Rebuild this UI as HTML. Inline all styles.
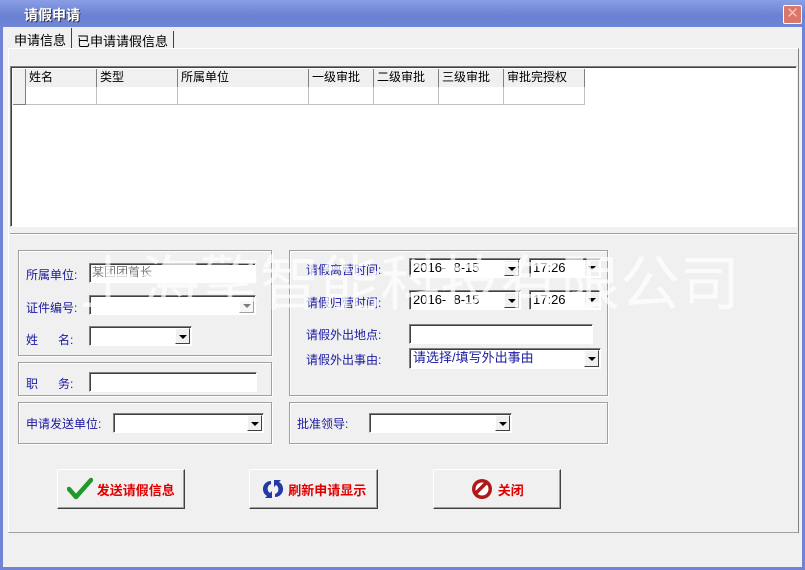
<!DOCTYPE html>
<html><head><meta charset="utf-8"><style>
*{box-sizing:border-box;margin:0;padding:0}
body{width:805px;height:570px;overflow:hidden;background:#6f84d4;font-family:"Liberation Sans","Noto Sans CJK SC","WenQuanYi Zen Hei",sans-serif;font-size:12px;position:relative}
.a{position:absolute}
.win{left:3px;top:27px;width:799px;height:540px;background:#f0f0f0}
.title{left:0;top:0;width:805px;height:27px;background:linear-gradient(#8a9ee6,#6a80d2 60%,#6f86d6)}
.gb{border:1px solid #a0a0a0;box-shadow:inset 1px 1px 0 #fff,1px 1px 0 #fff}
.in{background:#fff;border-top:1px solid #808080;border-left:1px solid #808080;border-bottom:1px solid #fff;border-right:1px solid #fff;box-shadow:inset 1px 1px 0 #404040}
.dd{position:absolute;right:1px;top:1px;width:15px;bottom:1px;background:#f0f0f0;border:1px solid;border-color:#fff #404040 #404040 #fff}
.dd:after{content:"";position:absolute;left:3px;top:6px;border:4px solid transparent;border-top:4px solid #000;border-bottom:0}
.lb{color:#1a1aa0;font-size:12px}
.btn{background:#f0f0f0;border:1px solid;border-color:#fff #404040 #404040 #fff;box-shadow:inset -1px -1px 0 #a0a0a0;color:#e00000;font-weight:bold;font-size:13px;display:flex;align-items:center;justify-content:center}
.th{position:absolute;top:0;height:18px;border-right:1px solid #808080;background:#f0f0f0;padding-left:3px;line-height:17px;font-size:12px}
.td{position:absolute;top:18px;height:18px;border-right:1px solid #c0c0c0;border-bottom:1px solid #c0c0c0}
.dv{font-size:13px}
</style></head><body>
<div class="a title"></div>
<div class="a" style="left:24px;top:5px;color:#fff;font-weight:bold;font-size:14px;text-shadow:1px 1px 0 #334">请假申请</div>
<div class="a" style="left:783px;top:5px;width:19px;height:19px;background:#d9776b;border:1px solid #fff;border-radius:2px;color:#f4c0b8;text-align:center;line-height:16px;font-size:15px">✕</div>
<div class="a win"></div>
<div class="a" style="left:8px;top:28px;width:64px;height:21px;background:#f0f0f0;border-right:1px solid #404040;font-size:13px;padding:2px 0 0 6px">申请信息</div>
<div class="a" style="left:74px;top:31px;width:100px;height:17px;border-right:1px solid #404040;font-size:13px;padding-left:3px">已申请请假信息</div>
<div class="a" style="left:8px;top:48px;width:791px;height:485px;border:1px solid;border-color:#fff #808080 #808080 #fff"></div>
<div class="a" style="left:10px;top:66px;width:787px;height:161px;background:#fff;border:1px solid;border-color:#808080 #fff #fff #808080;box-shadow:inset 1px 1px 0 #404040">
 <div class="a" style="left:2px;top:2px;width:572px;height:37px">
  <div class="th" style="left:0;width:13px;padding:0"></div>
  <div class="th" style="left:13px;width:71px">姓名</div>
  <div class="th" style="left:84px;width:81px">类型</div>
  <div class="th" style="left:165px;width:131px">所属单位</div>
  <div class="th" style="left:296px;width:65px">一级审批</div>
  <div class="th" style="left:361px;width:65px">二级审批</div>
  <div class="th" style="left:426px;width:65px">三级审批</div>
  <div class="th" style="left:491px;width:81px">审批完授权</div>
  <div class="td" style="left:0;width:13px;background:#f0f0f0;border-color:#808080"></div>
  <div class="td" style="left:13px;width:71px"></div><div class="td" style="left:84px;width:81px"></div><div class="td" style="left:165px;width:131px"></div><div class="td" style="left:296px;width:65px"></div><div class="td" style="left:361px;width:65px"></div><div class="td" style="left:426px;width:65px"></div><div class="td" style="left:491px;width:81px"></div>
 </div>
</div>
<div class="a" style="left:10px;top:233px;width:787px;height:1px;background:#a0a0a0;box-shadow:0 1px 0 #fff"></div>
<div class="a gb" style="left:18px;top:250px;width:254px;height:106px"></div>
<div class="a gb" style="left:18px;top:362px;width:254px;height:34px"></div>
<div class="a gb" style="left:18px;top:402px;width:254px;height:42px"></div>
<div class="a gb" style="left:289px;top:250px;width:319px;height:146px"></div>
<div class="a gb" style="left:289px;top:402px;width:319px;height:42px"></div>
<div class="a" style="left:9px;top:532px;width:789px;height:1px;background:#a0a0a0"></div>
<div class="a lb" style="left:26px;top:266px">所属单位:</div>
<div class="a in" style="left:89px;top:263px;width:167px;height:20px;padding-left:2px;color:#777;line-height:16px">某团团首长</div>
<div class="a lb" style="left:26px;top:299px">证件编号:</div>
<div class="a in" style="left:89px;top:295px;width:167px;height:20px"><div class="dd" style="opacity:.5"></div></div>
<div class="a lb" style="left:26px;top:331px">姓&nbsp;&nbsp;&nbsp;&nbsp;&nbsp;&nbsp;名:</div>
<div class="a in" style="left:89px;top:326px;width:103px;height:20px"><div class="dd"></div></div>
<div class="a lb" style="left:26px;top:375px">职&nbsp;&nbsp;&nbsp;&nbsp;&nbsp;&nbsp;务:</div>
<div class="a in" style="left:89px;top:372px;width:168px;height:20px"></div>
<div class="a lb" style="left:26px;top:415px">申请发送单位:</div>
<div class="a in" style="left:113px;top:413px;width:151px;height:20px"><div class="dd"></div></div>
<div class="a lb" style="left:306px;top:261px">请假离营时间:</div>
<div class="a in dv" style="left:409px;top:258px;width:112px;height:20px;padding-left:3px;line-height:17px">2016-&nbsp; 8-15<div class="dd"></div></div>
<div class="a in dv" style="left:529px;top:258px;width:72px;height:20px;padding-left:3px;line-height:17px">17:26<div class="dd" style="border:0;width:14px"></div></div>
<div class="a lb" style="left:306px;top:294px">请假归营时间:</div>
<div class="a in dv" style="left:409px;top:290px;width:112px;height:20px;padding-left:3px;line-height:17px">2016-&nbsp; 8-15<div class="dd"></div></div>
<div class="a in dv" style="left:529px;top:290px;width:72px;height:20px;padding-left:3px;line-height:17px">17:26<div class="dd" style="border:0;width:14px"></div></div>
<div class="a lb" style="left:306px;top:326px">请假外出地点:</div>
<div class="a in" style="left:409px;top:324px;width:184px;height:20px"></div>
<div class="a lb" style="left:306px;top:351px">请假外出事由:</div>
<div class="a in" style="left:409px;top:348px;width:192px;height:21px;padding-left:3px;line-height:17px;color:#1a1aa0;font-size:13px">请选择/填写外出事由<div class="dd"></div></div>
<div class="a lb" style="left:297px;top:415px">批准领导:</div>
<div class="a in" style="left:369px;top:413px;width:143px;height:20px"><div class="dd"></div></div>
<div class="a" style="left:80px;top:236px;font-size:60px;color:rgba(255,255,255,.7);white-space:nowrap">上海擎智能科技有限公司</div>
<div class="a btn" style="left:57px;top:469px;width:128px;height:40px"><svg width="26" height="24" viewBox="0 0 26 24"><path d="M2 12 L9 20 L24 3" stroke="#1f9a2a" stroke-width="4.5" fill="none" stroke-linecap="round" stroke-linejoin="round"/></svg>&nbsp;发送请假信息</div>
<div class="a btn" style="left:249px;top:469px;width:129px;height:40px"><svg width="24" height="24" viewBox="0 0 24 24"><path d="M10 4 A8 8 0 0 0 6 19 L4 21 L11 21 L11 14 L9 16 A5 5 0 0 1 10 7 Z M14 20 A8 8 0 0 0 18 5 L20 3 L13 3 L13 10 L15 8 A5 5 0 0 1 14 17 Z" fill="#2438a8"/></svg>&nbsp;刷新申请显示</div>
<div class="a btn" style="left:433px;top:469px;width:128px;height:40px"><svg width="24" height="24" viewBox="0 0 24 24"><circle cx="12" cy="12" r="10" fill="#b01818"/><circle cx="12" cy="12" r="6.5" fill="#fff"/><path d="M6 16 L16 6" stroke="#b01818" stroke-width="3.5"/></svg>&nbsp;关闭</div>
</body></html>
